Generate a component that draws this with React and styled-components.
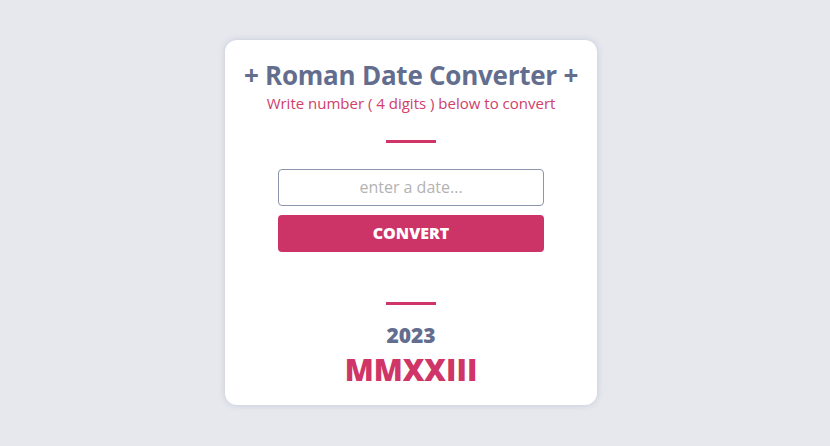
import React, { useState } from "react";
import styled, { createGlobalStyle } from "styled-components";

const GlobalStyle = createGlobalStyle`
  html, body {
    margin: 0;
    padding: 0;
    background: #e6e8ee;
    font-family: "Open Sans", "Noto Sans", sans-serif;
  }
`;

const Page = styled.div`
  width: 830px;
  height: 446px;
  box-sizing: border-box;
  padding: 0 8px 2px 0;
  display: flex;
  align-items: center;
  justify-content: center;
`;

const Card = styled.div`
  width: 372px;
  height: 365px;
  box-sizing: border-box;
  background: #ffffff;
  border-radius: 12px;
  box-shadow: 0 0 6px rgba(100, 110, 150, 0.25);
  display: flex;
  flex-direction: column;
  align-items: center;
  padding-top: 18px;
`;

const Title = styled.h1`
  margin: 0;
  font-size: 26px;
  font-weight: 700;
  color: #636e8e;
  letter-spacing: -0.25px;
  line-height: 34px;
`;

const Subtitle = styled.p`
  margin: 0;
  font-size: 15px;
  color: #d0406a;
  line-height: 22px;
`;

const Divider = styled.div`
  width: 50px;
  height: 3px;
  background: #cf3566;
  margin-top: ${(p) => p.$top}px;
`;

const Form = styled.div`
  width: 266px;
  display: flex;
  flex-direction: column;
  gap: 9px;
  margin-top: 26px;
`;

const Input = styled.input`
  box-sizing: border-box;
  width: 100%;
  height: 37px;
  border: 1px solid #8d94ad;
  border-radius: 4px;
  text-align: center;
  font-family: inherit;
  font-size: 16px;
  color: #555;
  outline: none;
  &::placeholder {
    color: #b3b3b3;
  }
`;

const Button = styled.button`
  height: 37px;
  border: none;
  border-radius: 4px;
  background: #cc3366;
  color: #ffffff;
  font-family: inherit;
  font-size: 16px;
  font-weight: 800;
  cursor: pointer;
`;

const Year = styled.div`
  margin-top: 16px;
  font-size: 21px;
  font-weight: 800;
  color: #636e8e;
  line-height: 28px;
`;

const Roman = styled.div`
  margin-top: 1px;
  font-size: 30px;
  font-weight: 800;
  color: #cf3566;
  line-height: 40px;
`;

export default function App() {
  const [value, setValue] = useState("");
  return (
    <Page>
      <GlobalStyle />
      <Card>
        <Title>+ Roman Date Converter +</Title>
        <Subtitle>Write number ( 4 digits ) below to convert</Subtitle>
        <Divider $top={26} />
        <Form>
          <Input
            placeholder="enter a date..."
            value={value}
            onChange={(e) => setValue(e.target.value)}
          />
          <Button>CONVERT</Button>
        </Form>
        <Divider $top={50} />
        <Year>2023</Year>
        <Roman>MMXXIII</Roman>
      </Card>
    </Page>
  );
}
